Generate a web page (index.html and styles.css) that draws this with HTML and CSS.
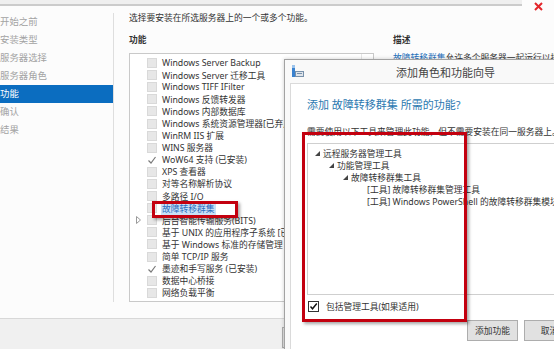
FILE: index.html
```html
<!DOCTYPE html>
<html>
  <head>
    <title>添加角色和功能向导</title>
    <link rel="stylesheet" href="styles.css">
  </head>
  <body>
    <div class="window">
      <div class="topbar">
        <div class="topline"></div>
        <svg class="close" width="9" height="9" viewBox="0 0 9 9"><path d="M1 1L8 8M8 1L1 8" stroke="#e3262b" stroke-width="2"/></svg>
      </div>

      <div class="content">
        <ul class="steps">
          <li class="step">开始之前</li>
          <li class="step">安装类型</li>
          <li class="step">服务器选择</li>
          <li class="step">服务器角色</li>
          <li class="step on">功能</li>
          <li class="step">确认</li>
          <li class="step">结果</li>
        </ul>

        <div class="pane">
          <p class="intro">选择要安装在所选服务器上的一个或多个功能。</p>
          <div class="cols">
            <div class="features">
              <div class="label">功能</div>
              <div class="list">
                <ul class="rows">
                  <li class="feat"><span class="slot"></span><span class="box"></span>Windows Server Backup</li>
                  <li class="feat"><span class="slot"></span><span class="box"></span>Windows Server 迁移工具</li>
                  <li class="feat"><span class="slot"></span><span class="box"></span>Windows TIFF IFilter</li>
                  <li class="feat"><span class="slot"></span><span class="box"></span>Windows 反馈转发器</li>
                  <li class="feat"><span class="slot"></span><span class="box"></span>Windows 内部数据库</li>
                  <li class="feat"><span class="slot"></span><span class="box"></span>Windows 系统资源管理器[已弃用]</li>
                  <li class="feat"><span class="slot"></span><span class="box"></span>WinRM IIS 扩展</li>
                  <li class="feat"><span class="slot"></span><span class="box"></span>WINS 服务器</li>
                  <li class="feat"><span class="slot"></span><span class="box tick"><svg width="10" height="10" viewBox="0 0 10 10"><path d="M1.5 5.5L4 8L8.5 2" fill="none" stroke="#7a7a7a" stroke-width="1.2"/></svg></span>WoW64 支持 (已安装)</li>
                  <li class="feat"><span class="slot"></span><span class="box"></span>XPS 查看器</li>
                  <li class="feat"><span class="slot"></span><span class="box"></span>对等名称解析协议</li>
                  <li class="feat"><span class="slot"></span><span class="box"></span>多路径 I/O</li>
                  <li class="feat"><span class="slot"></span><span class="box"></span><span class="sel">故障转移群集</span></li>
                  <li class="feat"><span class="slot"><svg width="5" height="8" viewBox="0 0 5 8"><path d="M0.5 0.5L4.5 4L0.5 7.5Z" fill="none" stroke="#9a9a9a"/></svg></span><span class="box"></span>后台智能传输服务(BITS)</li>
                  <li class="feat"><span class="slot"></span><span class="box"></span>基于 UNIX 的应用程序子系统 [已弃用]</li>
                  <li class="feat"><span class="slot"></span><span class="box"></span>基于 Windows 标准的存储管理</li>
                  <li class="feat"><span class="slot"></span><span class="box"></span>简单 TCP/IP 服务</li>
                  <li class="feat"><span class="slot"></span><span class="box tick"><svg width="10" height="10" viewBox="0 0 10 10"><path d="M1.5 5.5L4 8L8.5 2" fill="none" stroke="#7a7a7a" stroke-width="1.2"/></svg></span>墨迹和手写服务 (已安装)</li>
                  <li class="feat"><span class="slot"></span><span class="box"></span>数据中心桥接</li>
                  <li class="feat"><span class="slot"></span><span class="box"></span>网络负载平衡</li>
                </ul>
                <div class="scroll"><div class="arrow"></div></div>
              </div>
            </div>
            <div class="desc">
              <div class="label">描述</div>
              <div class="desc-text"><span class="link">故障转移群集</span>允许多个服务器一起运行以提供高可用性</div>
            </div>
          </div>
        </div>
      </div>

      <div class="footer">
        <button class="btn">&lt; 上一步</button>
      </div>

      <div class="dialog">
        <div class="dlg-title">
          <svg width="12" height="13" viewBox="0 0 12 13"><rect x="0" y="0" width="3" height="12" fill="#3a82cf"/><rect x="0" y="0" width="3" height="3" fill="#9cc4ec"/><rect x="3.5" y="6.5" width="8" height="5" fill="#dfe4ea" stroke="#7891ab"/><rect x="5" y="8" width="5" height="1" fill="#7891ab"/></svg>
          <span class="dlg-name">添加角色和功能向导</span>
        </div>
        <div class="dlg-body">
          <div class="dlg-head">添加 故障转移群集 所需的功能?</div>
          <div class="dlg-note">需要使用以下工具来管理此功能，但不需要安装在同一服务器上。</div>
          <ul class="tree">
            <li class="node"><svg width="5" height="5" viewBox="0 0 5 5"><path d="M5 0V5H0Z" fill="#444"/></svg>远程服务器管理工具</li>
            <li class="node lv2"><svg width="5" height="5" viewBox="0 0 5 5"><path d="M5 0V5H0Z" fill="#444"/></svg>功能管理工具</li>
            <li class="node lv3"><svg width="5" height="5" viewBox="0 0 5 5"><path d="M5 0V5H0Z" fill="#444"/></svg>故障转移群集工具</li>
            <li class="node leaf">[工具] 故障转移群集管理工具</li>
            <li class="node leaf">[工具] Windows PowerShell 的故障转移群集模块</li>
          </ul>
          <div class="check-row">
            <span class="cbox"><svg width="9" height="9" viewBox="0 0 9 9"><path d="M1.5 4.5L3.5 6.8L7.8 1.5" fill="none" stroke="#111" stroke-width="1.4"/></svg></span>
            包括管理工具(如果适用)
          </div>
          <div class="actions">
            <button class="btn primary">添加功能</button>
            <button class="btn">取消</button>
          </div>
        </div>
      </div>

      <div class="mark mark-small"></div>
      <div class="mark mark-big"></div>
    </div>
  </body>
</html>
```

FILE: styles.css
```css
html,
body {
  margin: 0;
  width: 554px;
  height: 349px;
  overflow: hidden;
  background-color: #fcfcfc;
  font-family: "Noto Sans", "Noto Sans CJK SC", sans-serif;
  font-size: 8.75px;
  color: #333;
}

ul {
  list-style: none;
  margin: 0;
  padding: 0;
}

.window {
  position: relative;
  height: 349px;
  display: flex;
  flex-direction: column;
}

.topbar {
  height: 13px;
  display: flex;
  align-items: flex-start;
}

.topline {
  width: 522px;
  height: 4px;
  background-color: #efefef;
  border-bottom: 2px solid #cbcbcb;
}

.close {
  margin: 2px 0 0 12px;
}

.content {
  display: flex;
  height: 305px;
}

.steps {
  width: 113px;
  flex-shrink: 0;
  margin-bottom: 16px;
  border-right: 1px solid #dedede;
}

.step {
  height: 18px;
  line-height: 18px;
  font-size: 9.4px;
  color: #a3a3a3;
}

.step.on {
  background-color: #0b6dc0;
  color: #fff;
}

.pane {
  flex: 1;
  min-width: 0;
  overflow: hidden;
  padding-left: 15px;
}

.intro {
  margin: -1px 0 0;
  line-height: 12px;
  white-space: nowrap;
}

.cols {
  display: flex;
  margin-top: 10px;
}

.features {
  width: 245px;
  flex-shrink: 0;
}

.label {
  font-weight: 700;
  line-height: 12px;
  color: #333;
  margin-bottom: 7px;
}

.list {
  height: 249px;
  box-sizing: border-box;
  border: 1px solid #c9c9c9;
  background-color: #fff;
  display: flex;
}

.rows {
  flex: 1;
  min-width: 0;
  padding-top: 3px;
  overflow: hidden;
  white-space: nowrap;
}

.feat {
  height: 12.1px;
  display: flex;
  align-items: center;
  padding-left: 6px;
}

.slot {
  width: 11px;
  flex-shrink: 0;
  display: flex;
  align-items: center;
}

.box {
  width: 10px;
  height: 10px;
  box-sizing: border-box;
  background-color: #e7e7e7;
  border: 1px solid #d9d9d9;
  margin-right: 5px;
  flex-shrink: 0;
}

.box.tick {
  background: none;
  border: none;
}

.sel {
  background-color: #c9e0f6;
  color: #2a6cbf;
  padding: 0 1px;
  margin-left: -1px;
}

.scroll {
  width: 10px;
  flex-shrink: 0;
  border-left: 1px solid #e6e6e6;
  margin-right: 1px;
}

.arrow {
  height: 8px;
  border-bottom: 1px solid #e0e0e0;
}

.desc {
  margin-left: 19px;
  flex-shrink: 0;
}

.desc .label {
  margin-bottom: 6px;
}

.desc-text {
  line-height: 12px;
  white-space: nowrap;
}

.link {
  color: #1f6fb9;
}

.footer {
  flex: 1;
  background-color: #f0f0f0;
  border-top: 1px solid #d8d8d8;
  padding: 8px 0 0 282px;
}

.btn {
  height: 21px;
  width: 56px;
  padding: 0;
  font-family: "Noto Sans", "Noto Sans CJK SC", sans-serif;
  font-size: 8.75px;
  color: #333;
  background-color: #e1e1e1;
  border: 1px solid #adadad;
}

/* wizard dialog sits on top of the server manager window */
.dialog {
  position: absolute;
  left: 284px;
  top: 59px;
  width: 290px;
  height: 300px;
  background-color: #f9f9f9;
  border: 1px solid #a2a2a2;
  box-shadow: 0 0 4px rgba(0, 0, 0, 0.2);
}

.dlg-title {
  height: 23px;
  display: flex;
  align-items: center;
  padding-left: 7px;
}

.dlg-name {
  margin-left: 92px;
  font-size: 11px;
  color: #444;
}

.dlg-body {
  margin-left: 5px;
  height: 260px;
  border-top: 1px solid #dadada;
  border-left: 1px solid #dadada;
  background-color: #fff;
  padding: 14px 0 0 16px;
}

.dlg-head {
  font-size: 11px;
  line-height: 14px;
  color: #2b78b0;
}

.dlg-note {
  margin-top: 15px;
  line-height: 11px;
  white-space: nowrap;
}

.tree {
  margin-top: 5px;
  width: 300px;
  height: 152px;
  box-sizing: border-box;
  border: 1px solid #cfcfcf;
  padding-top: 3px;
  white-space: nowrap;
}

.node {
  height: 12.2px;
  display: flex;
  align-items: center;
  padding-left: 7px;
}

.node svg {
  margin-right: 3px;
}

.node.lv2 {
  padding-left: 21px;
}

.node.lv3 {
  padding-left: 35px;
}

.node.leaf {
  padding-left: 59px;
}

.check-row {
  margin-top: 5px;
  height: 12px;
  display: flex;
  align-items: center;
}

.cbox {
  width: 9px;
  height: 9px;
  border: 1px solid #333;
  margin: 0 7px 0 1px;
  display: flex;
}

.actions {
  margin-top: 8px;
  display: flex;
}

.actions .primary {
  margin-left: 160px;
}

.actions .btn + .btn {
  margin-left: 6px;
}

/* red annotation frames drawn over the screenshot */
.mark {
  position: absolute;
  box-sizing: border-box;
  border: 3px solid #c3000f;
  box-shadow: 2px 2px 3px rgba(0, 0, 0, 0.35);
}

.mark-small {
  left: 152px;
  top: 201px;
  width: 86px;
  height: 17px;
}

.mark-big {
  left: 302px;
  top: 132px;
  width: 165px;
  height: 190px;
}
```
